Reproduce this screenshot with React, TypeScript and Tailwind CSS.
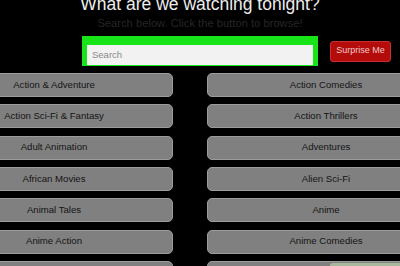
const genres = [
  ['Action & Adventure', 'Action Comedies'],
  ['Action Sci-Fi & Fantasy', 'Action Thrillers'],
  ['Adult Animation', 'Adventures'],
  ['African Movies', 'Alien Sci-Fi'],
  ['Animal Tales', 'Anime'],
  ['Anime Action', 'Anime Comedies'],
  ['Anime Dramas', 'Anime Fantasy'],
]

export default function App() {
  return (
    <div className="relative w-[400px] h-[266px] overflow-hidden bg-black font-['Liberation_Sans',Arial,sans-serif]">
      {/* Header */}
      <div className="flex flex-col items-center">
        <h1 className="mt-[-4px] text-[17.5px] leading-[17px] text-[#ececec] font-normal">
          What are we watching tonight?
        </h1>
        <p className="mt-[3px] text-[11.2px] leading-[14px] text-[#262626]">
          Search below. Click the button to browse!
        </p>
      </div>

      {/* Search row */}
      <div className="mt-[6px] flex items-center pl-[82px] gap-[12px]">
        <div className="w-[236px] h-[30px] bg-[#19e419] p-[5px]">
          <input
            className="w-full h-full bg-[#f2f2f2] px-[5px] text-[9.5px] text-[#333] placeholder:text-[#8a8a8a] outline-none"
            placeholder="Search"
          />
        </div>
        <button className="w-[61px] h-[21px] bg-[#b40b0b] border border-[#c83030] rounded-[3px] text-[9px] text-[#f0c8c8]">
          Surprise Me
        </button>
      </div>

      {/* Genre grid */}
      <div className="mt-[7px] ml-[-65px] w-[510px] grid grid-cols-2 gap-x-[34px] gap-y-[7.33px]">
        {genres.flat().map((g) => (
          <button
            key={g}
            className="h-[24px] bg-[#808080] border border-[#9c9c9c] rounded-[5px] text-[9.6px] text-[#141414] flex items-center justify-center"
          >
            {g}
          </button>
        ))}
      </div>

      {/* Partial overlay bottom-right */}
      <div className="absolute left-[330px] top-[263px] w-[80px] h-[10px] bg-[#a9b99e] rounded-tl-[3px]" />
    </div>
  )
}
